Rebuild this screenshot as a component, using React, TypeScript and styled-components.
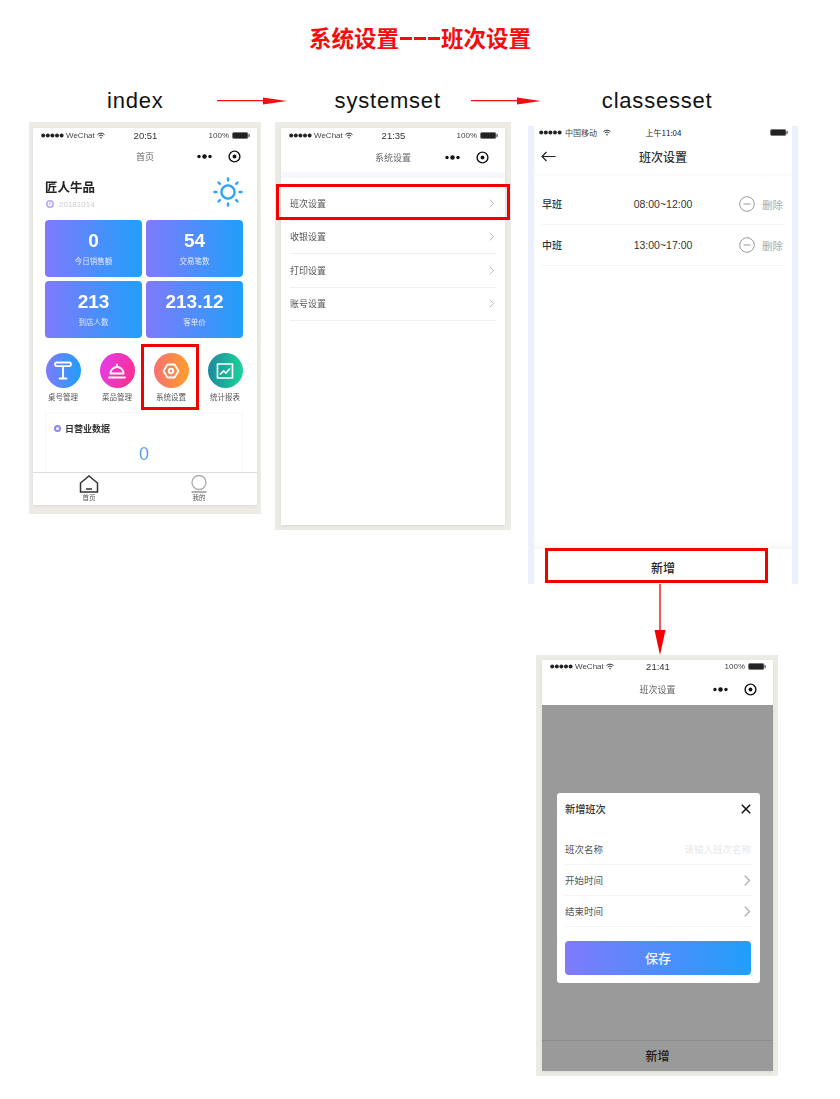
import React from "react";
import styled, { createGlobalStyle } from "styled-components";

const GlobalStyle = createGlobalStyle`
  html, body {
    margin: 0;
    padding: 0;
    background: #fff;
  }
  * {
    box-sizing: border-box;
  }
`;

const cjk = `"Noto Sans CJK SC", "Liberation Sans", sans-serif`;
const latin = `"Liberation Sans", "Noto Sans CJK SC", sans-serif`;
const brand = "linear-gradient(90deg, #7f7afc, #209ffa)";

const Page = styled.div`
  width: 840px;
  height: 1099px;
  padding-top: 24px;
  overflow: hidden;
  font-family: ${cjk};
`;

const Title = styled.h1`
  display: flex;
  align-items: center;
  justify-content: center;
  margin: 0;
  height: 26px;
  line-height: 26px;
  font-size: 22.5px;
  font-weight: 700;
  color: #f60c0c;
`;

const Dashes = styled.span`
  display: flex;
  gap: 2px;
  margin: 3px 1px 0;
`;

const Dash = styled.i`
  width: 12px;
  height: 2.5px;
  background: #f60c0c;
`;

const Steps = styled.div`
  display: flex;
  align-items: center;
  height: 28px;
  margin-top: 37px;
  padding-left: 107px;
`;

const StepName = styled.div<{ $left?: number }>`
  margin-left: ${(p) => p.$left || 0}px;
  font-family: ${latin};
  font-size: 22px;
  line-height: 28px;
  letter-spacing: 0.8px;
  color: #111;
`;

const StepArrow = styled.svg<{ $left: number }>`
  display: block;
  margin-left: ${(p) => p.$left}px;
`;

const Board = styled.div`
  display: flex;
  align-items: flex-start;
  margin-top: 7px;
  padding-left: 29px;
`;

const Frame = styled.div<{ $width: number; $pad: string; $left?: number }>`
  width: ${(p) => p.$width}px;
  margin-left: ${(p) => p.$left || 0}px;
  padding: ${(p) => p.$pad};
  background: #ecebe6;
`;

const Screen = styled.div<{ $height: number }>`
  display: flex;
  flex-direction: column;
  height: ${(p) => p.$height}px;
  background: #fff;
  box-shadow: 0 1px 3px rgba(0, 0, 0, 0.08);
  filter: blur(0.3px);
`;

const Status = styled.div<{ $height: number; $left: number; $right: number }>`
  display: grid;
  grid-template-columns: 1fr auto 1fr;
  align-items: center;
  height: ${(p) => p.$height}px;
  padding: 0 ${(p) => p.$right}px 0 ${(p) => p.$left}px;
  font-family: ${latin};
  font-size: 8px;
  color: #444;
`;

const StatusLeft = styled.div`
  display: flex;
  align-items: center;
  gap: 2px;
`;

const StatusRight = styled.div`
  display: flex;
  align-items: center;
  justify-content: flex-end;
  gap: 3px;
`;

const StatusTime = styled.div`
  font-size: 9.5px;
  color: #333;
`;

const CarrierTime = styled.div`
  font-family: ${cjk};
  font-size: 8px;
  color: #222;
`;

const Carrier = styled.span`
  font-family: ${cjk};
  font-size: 8px;
  margin: 0 4px 0 1px;
  color: #444;
`;

const Nav = styled.div<{ $height: number }>`
  display: grid;
  grid-template-columns: 1fr auto 1fr;
  align-items: center;
  height: ${(p) => p.$height}px;
  padding: 0 16px;
`;

const NavTitle = styled.div`
  font-size: 9px;
  color: #666;
`;

const NavActions = styled.div`
  display: flex;
  align-items: center;
  justify-content: flex-end;
  gap: 16px;
`;

const Seam = styled.div`
  height: 6px;
  background: #f7f8fb;
`;

const Body = styled.div`
  padding: 0 14px 0 12px;
`;

const Head = styled.div`
  display: flex;
  justify-content: space-between;
  height: 50px;
  padding-top: 10px;
`;

const Shop = styled.div`
  font-size: 12.5px;
  line-height: 14px;
  font-weight: 700;
  color: #222;
`;

const DateRow = styled.div`
  display: flex;
  align-items: center;
  gap: 5px;
  height: 14px;
  margin: 3px 0 0 1px;
  font-family: ${latin};
  font-size: 8px;
  color: #ccc;
`;

const SunIcon = styled.svg`
  display: block;
  margin-top: -4px;
`;

const Stats = styled.div`
  display: grid;
  grid-template-columns: 1fr 1fr;
  grid-auto-rows: 57px;
  gap: 4px;
`;

const Stat = styled.div`
  display: flex;
  flex-direction: column;
  align-items: center;
  padding-top: 9px;
  border-radius: 4px;
  background: ${brand};
  color: #fff;
`;

const StatValue = styled.div`
  font-family: ${latin};
  font-size: 19px;
  line-height: 24px;
  font-weight: 700;
`;

const StatLabel = styled.div`
  margin-top: 3px;
  font-size: 7.5px;
  line-height: 10px;
  color: #e8e8ff;
`;

const Tiles = styled.div`
  display: grid;
  grid-template-columns: repeat(4, 54px);
  margin: 6px 0 0 -9px;
`;

const Tile = styled.div`
  position: relative;
  display: flex;
  flex-direction: column;
  align-items: center;
  height: 66px;
  padding-top: 9px;
`;

const TileIcon = styled.div<{ $bg: string }>`
  display: flex;
  align-items: center;
  justify-content: center;
  width: 35px;
  height: 35px;
  border-radius: 50%;
  background: ${(p) => p.$bg};
`;

const TileLabel = styled.div`
  margin-top: 3px;
  font-size: 7.5px;
  line-height: 12px;
  color: #555;
`;

const Highlight = styled.div<{ $inset: string }>`
  position: absolute;
  inset: ${(p) => p.$inset};
  border: 3px solid #f40000;
  pointer-events: none;
`;

const DayCard = styled.div`
  height: 60px;
  margin-top: 2px;
  padding: 8px 0 0 8px;
  border: 1px solid #f7f7f7;
  border-bottom: 0;
`;

const DayTitle = styled.div`
  display: flex;
  align-items: center;
  gap: 4px;
  height: 14px;
  font-size: 9px;
  font-weight: 700;
  color: #333;
`;

const Ring = styled.span`
  width: 7px;
  height: 7px;
  border: 2px solid #8f86f5;
  border-radius: 50%;
`;

const DayValue = styled.div`
  margin: 9px 0 0 -8px;
  font-family: ${latin};
  font-size: 18px;
  line-height: 20px;
  text-align: center;
  color: #5e9ff8;
`;

const Tabs = styled.div`
  display: grid;
  grid-template-columns: 112px 108px;
  height: 33px;
  border-top: 1px solid #ddd;
`;

const Tab = styled.div`
  display: flex;
  flex-direction: column;
  align-items: center;
  padding-top: 2px;
`;

const TabLabel = styled.div`
  font-size: 6.5px;
  line-height: 9px;
  color: #555;
`;

const Menu = styled.div`
  margin-top: 9px;
`;

const MenuRow = styled.div<{ $h: number }>`
  position: relative;
  display: flex;
  align-items: center;
  justify-content: space-between;
  height: ${(p) => p.$h}px;
  margin: 0 9px;
  padding-right: 2px;
  border-bottom: 1px solid #f0f0f0;
  font-size: 9px;
  color: #555;
`;

const ThirdColumn = styled.div`
  display: flex;
  flex-direction: column;
  align-items: flex-start;
  margin: 4px 0 0 17px;
`;

const Shifts = styled.div`
  display: flex;
  flex-direction: column;
  width: 270px;
  height: 458px;
  padding: 0 6px;
  background: #eaf1fb;
`;

const ShiftsScreen = styled(Screen)`
  position: relative;
  box-shadow: none;
  filter: none;
`;

const ShiftNav = styled(Nav)`
  padding: 0 7px;
`;

const ShiftTitle = styled.div`
  font-size: 12px;
  font-weight: 500;
  color: #333;
`;

const NavFade = styled.div`
  height: 4px;
  background: linear-gradient(#fafafa, #fff);
`;

const ShiftList = styled.div`
  margin-top: 6px;
  padding: 0 8px;
`;

const ShiftRow = styled.div`
  display: grid;
  grid-template-columns: 1fr auto 1fr;
  align-items: center;
  height: 41px;
  border-bottom: 1px solid #f3f3f3;
`;

const ShiftName = styled.div`
  padding-bottom: 1px;
  font-size: 10px;
  font-weight: 500;
  color: #333;
`;

const ShiftTime = styled.div`
  font-family: ${latin};
  font-size: 10.5px;
  color: #333;
`;

const ShiftAction = styled.div`
  display: flex;
  align-items: center;
  justify-content: flex-end;
  gap: 7px;
  padding-right: 1px;
  font-size: 10.5px;
  color: #aaa;
`;

const AddFade = styled.div`
  height: 8px;
  margin-top: auto;
  background: linear-gradient(#fff, #f7f7f7);
`;

const AddBar = styled.div`
  position: relative;
  display: flex;
  align-items: center;
  justify-content: center;
  height: 35px;
  padding-top: 1px;
  font-size: 12px;
  font-weight: 500;
  color: #222;
`;

const Connector = styled.svg`
  display: block;
  margin-left: 125px;
`;

const Mask = styled.div`
  flex: 1;
  display: flex;
  flex-direction: column;
  background: #9a9a9a;
`;

const Modal = styled.div`
  width: 203.5px;
  margin: 88px 0 0 14.5px;
  padding: 0 9px 8px 8.5px;
  border-radius: 3px;
  background: #fff;
`;

const ModalHead = styled.div`
  display: flex;
  align-items: center;
  justify-content: space-between;
  height: 32px;
  margin-bottom: 9px;
  padding-bottom: 1px;
  font-size: 10.2px;
  font-weight: 500;
  color: #333;
`;

const FormRow = styled.div`
  display: flex;
  align-items: center;
  justify-content: space-between;
  height: 31px;
  border-bottom: 1px solid #f3f3f3;
  font-size: 9.5px;
  color: #555;
`;

const Placeholder = styled.span`
  color: #e8e8e8;
`;

const Save = styled.div`
  display: flex;
  align-items: center;
  justify-content: center;
  height: 34px;
  margin-top: 14px;
  padding-bottom: 2px;
  border-radius: 4px;
  background: ${brand};
  font-size: 13px;
  font-weight: 500;
  color: #f4f4ff;
`;

const MaskBar = styled.div`
  display: flex;
  align-items: center;
  justify-content: center;
  height: 31px;
  margin-top: auto;
  padding-bottom: 2px;
  border-top: 1px solid #8c8c8c;
  font-size: 12px;
  font-weight: 500;
  color: #1c1c1c;
`;

const Signal = () => (
  <svg width="23" height="5" viewBox="0 0 23 5">
    {[2.2, 6.8, 11.4, 16, 20.6].map((x) => (
      <circle key={x} cx={x} cy="2.5" r="2" fill="#222" />
    ))}
  </svg>
);

const Wifi = () => (
  <svg width="8" height="7" viewBox="0 0 8 7" fill="none" stroke="#333">
    <path d="M.5 2.6a5 5 0 0 1 7 0M1.8 4a3.2 3.2 0 0 1 4.4 0" />
    <circle cx="4" cy="5.7" r=".8" fill="#333" stroke="none" />
  </svg>
);

const Battery = () => (
  <svg width="18" height="7" viewBox="0 0 18 7">
    <rect x=".5" y=".5" width="15.5" height="6" rx="1.5" fill="#222" stroke="#777" />
    <rect x="16.6" y="2.2" width="1.2" height="2.6" fill="#555" />
  </svg>
);

const MoreTarget = () => (
  <NavActions>
    <svg width="15" height="5" viewBox="0 0 15 5">
      <circle cx="2" cy="2.5" r="1.7" fill="#111" />
      <circle cx="7.5" cy="2.5" r="2.2" fill="#111" />
      <circle cx="13" cy="2.5" r="1.7" fill="#111" />
    </svg>
    <svg width="13" height="13" viewBox="0 0 13 13">
      <circle cx="6.5" cy="6.5" r="5.4" fill="none" stroke="#111" strokeWidth="1.4" />
      <circle cx="6.5" cy="6.5" r="1.9" fill="#111" />
    </svg>
  </NavActions>
);

const Chevron = ({ size = 9, color = "#bbb" }: { size?: number; color?: string }) => (
  <svg width={size * 0.6} height={size} viewBox="0 0 6 10" fill="none" stroke={color} strokeWidth="1.1">
    <path d="M.7.7 5 5 .7 9.3" />
  </svg>
);

const MinusCircle = () => (
  <svg width="16" height="16" viewBox="0 0 16 16" fill="none" stroke="#999">
    <circle cx="8" cy="8" r="7.3" />
    <path d="M4.5 8h7" />
  </svg>
);

const WeChatStatus = ({ time, height = 14 }: { time: string; height?: number }) => (
  <Status $height={height} $left={8} $right={7}>
    <StatusLeft>
      <Signal />
      WeChat
      <Wifi />
    </StatusLeft>
    <StatusTime>{time}</StatusTime>
    <StatusRight>
      100%
      <Battery />
    </StatusRight>
  </Status>
);

const RedArrow = ({ left }: { left: number }) => (
  <StepArrow $left={left} width="70" height="10" viewBox="0 0 70 10">
    <path d="M0 4.6h48" stroke="#f01010" strokeWidth="1.2" />
    <path d="M46 1.5 70 5 46 8.5z" fill="#f01010" />
  </StepArrow>
);

const stats = [
  { value: "0", label: "今日销售额" },
  { value: "54", label: "交易笔数" },
  { value: "213", label: "到店人数" },
  { value: "213.12", label: "客单价" },
];

const tiles = [
  {
    label: "桌号管理",
    bg: brand,
    icon: (
      <g fill="none" stroke="#fff" strokeWidth="1.8" strokeLinecap="round">
        <rect x="6" y="5.5" width="16" height="3.6" rx="1.8" />
        <path d="M14 9.4V21M10.5 21.5h7" />
      </g>
    ),
  },
  {
    label: "菜品管理",
    bg: "linear-gradient(110deg, #e23df2, #ff2d85)",
    icon: (
      <g fill="none" stroke="#fff" strokeWidth="1.8" strokeLinecap="round">
        <path d="M7.5 16.5a6.5 6.5 0 0 1 13 0zM14 10V7.5M6 20.5h16" />
      </g>
    ),
  },
  {
    label: "系统设置",
    bg: "linear-gradient(90deg, #f86f70, #ff9f2b)",
    icon: (
      <g fill="none" stroke="#fff" strokeWidth="1.9" strokeLinejoin="round">
        <path d="M10.5 7.5h7l4 6.5-4 6.5h-7l-4-6.5z" />
        <circle cx="14" cy="14" r="2.2" />
      </g>
    ),
  },
  {
    label: "统计报表",
    bg: "linear-gradient(90deg, #1b8a9e, #1dd29a)",
    icon: (
      <g fill="none" stroke="#fff" strokeWidth="1.7" strokeLinejoin="round">
        <path d="M6.5 7h15v14h-15zM9 17.5l3.5-3.5 2.5 2 4-4.5" />
      </g>
    ),
  },
];

const Sun = () => (
  <SunIcon width="30" height="32" viewBox="0 0 30 32" fill="none" stroke="#2ba4f8" strokeWidth="2.4" strokeLinecap="round">
    <circle cx="15" cy="16" r="6.6" />
    <path d="M15 2.5v2M15 27.500v2M1.500 16h2M26.500 16h2M5.500 6.500l1.300 1.300M23.200 24.200l1.300 1.300M5.500 25.500l1.300-1.300M23.200 7.800l1.300-1.300" />
  </SunIcon>
);

function App() {
  return (
    <Page>
      <GlobalStyle />
      <Title>
        系统设置
        <Dashes>
          <Dash />
          <Dash />
          <Dash />
        </Dashes>
        班次设置
      </Title>

      <Steps>
        <StepName>index</StepName>
        <RedArrow left={53} />
        <StepName $left={48}>systemset</StepName>
        <RedArrow left={30} />
        <StepName $left={61}>classesset</StepName>
      </Steps>

      <Board>
        <Frame $width={232} $pad="6px 4px 9px">
          <Screen $height={377}>
            <WeChatStatus time="20:51" />
            <Nav $height={28}>
              <span />
              <NavTitle>首页</NavTitle>
              <MoreTarget />
            </Nav>
            <Body>
              <Head>
                <div>
                  <Shop>匠人牛品</Shop>
                  <DateRow>
                    <svg width="8" height="8" viewBox="0 0 8 8" fill="none" stroke="#b3a8fa" strokeWidth="1.5">
                      <circle cx="4" cy="4" r="3.2" />
                      <path d="M4 2.2V4.2H2.6" strokeWidth="1" />
                    </svg>
                    20181014
                  </DateRow>
                </div>
                <Sun />
              </Head>
              <Stats>
                {stats.map((s) => (
                  <Stat key={s.label}>
                    <StatValue>{s.value}</StatValue>
                    <StatLabel>{s.label}</StatLabel>
                  </Stat>
                ))}
              </Stats>
              <Tiles>
                {tiles.map((t) => (
                  <Tile key={t.label}>
                    <TileIcon $bg={t.bg}>
                      <svg width="28" height="28" viewBox="0 0 28 28">
                        {t.icon}
                      </svg>
                    </TileIcon>
                    <TileLabel>{t.label}</TileLabel>
                    {t.label === "系统设置" && <Highlight $inset="0 -1px 0 -3px" />}
                  </Tile>
                ))}
              </Tiles>
              <DayCard>
                <DayTitle>
                  <Ring />
                  日营业数据
                </DayTitle>
                <DayValue>0</DayValue>
              </DayCard>
            </Body>
            <Tabs>
              <Tab>
                <svg width="20" height="18" viewBox="0 0 20 18" fill="none" stroke="#333" strokeWidth="1.5">
                  <path d="M1.5 8 10 1l8.500 7v9h-17zM7 14h6" />
                </svg>
                <TabLabel>首页</TabLabel>
              </Tab>
              <Tab>
                <svg width="18" height="18" viewBox="0 0 18 18" fill="none" stroke="#aaa" strokeWidth="1.3">
                  <circle cx="9" cy="7.5" r="7" />
                  <path d="M1.500 17h15" stroke="#888" />
                </svg>
                <TabLabel>我的</TabLabel>
              </Tab>
            </Tabs>
          </Screen>
        </Frame>

        <Frame $width={236} $pad="6px 6px 5px" $left={14}>
          <Screen $height={397}>
            <WeChatStatus time="21:35" />
            <Nav $height={30}>
              <span />
              <NavTitle>系统设置</NavTitle>
              <MoreTarget />
            </Nav>
            <Seam />
            <Menu>
              <MenuRow $h={33.5}>
                班次设置
                <Chevron />
                <Highlight $inset="-3px -14px 0" />
              </MenuRow>
              <MenuRow $h={33.5}>
                收银设置
                <Chevron />
              </MenuRow>
              <MenuRow $h={33.5}>
                打印设置
                <Chevron />
              </MenuRow>
              <MenuRow $h={33.5}>
                账号设置
                <Chevron />
              </MenuRow>
            </Menu>
          </Screen>
        </Frame>

        <ThirdColumn>
          <Shifts>
            <ShiftsScreen $height={458}>
              <Status $height={12} $left={5} $right={4}>
                <StatusLeft>
                  <Signal />
                  <Carrier>中国移动</Carrier>
                  <Wifi />
                </StatusLeft>
                <CarrierTime>上午11:04</CarrierTime>
                <StatusRight>
                  <Battery />
                </StatusRight>
              </Status>
              <ShiftNav $height={36}>
                <svg width="15" height="11" viewBox="0 0 15 11" fill="none" stroke="#222" strokeWidth="1.2">
                  <path d="M14.500 5.500H1M5.500 1 1 5.500 5.500 10" />
                </svg>
                <ShiftTitle>班次设置</ShiftTitle>
                <span />
              </ShiftNav>
              <NavFade />
              <ShiftList>
                <ShiftRow>
                  <ShiftName>早班</ShiftName>
                  <ShiftTime>08:00~12:00</ShiftTime>
                  <ShiftAction>
                    <MinusCircle />
                    删除
                  </ShiftAction>
                </ShiftRow>
                <ShiftRow>
                  <ShiftName>中班</ShiftName>
                  <ShiftTime>13:00~17:00</ShiftTime>
                  <ShiftAction>
                    <MinusCircle />
                    删除
                  </ShiftAction>
                </ShiftRow>
              </ShiftList>
              <AddFade />
              <AddBar>
                新增
                <Highlight $inset="-1px 24px 1px 11px" />
              </AddBar>
            </ShiftsScreen>
          </Shifts>

          <Connector width="14" height="71" viewBox="0 0 14 71">
            <path d="M7 0v48" stroke="#f01010" strokeWidth="1.4" />
            <path d="M1.500 46h11L7 71z" fill="#f40000" />
          </Connector>

          <Frame $width={242} $pad="5px 5px 5px 6px" $left={8}>
            <Screen $height={411}>
              <WeChatStatus time="21:41" height={13} />
              <Nav $height={32}>
                <span />
                <NavTitle>班次设置</NavTitle>
                <MoreTarget />
              </Nav>
              <Mask>
                <Modal>
                  <ModalHead>
                    新增班次
                    <svg width="10" height="10" viewBox="0 0 10 10" stroke="#111" strokeWidth="1.5">
                      <path d="M.8.8l8.400 8.400M9.200.8.800 9.200" />
                    </svg>
                  </ModalHead>
                  <FormRow>
                    班次名称
                    <Placeholder>请输入班次名称</Placeholder>
                  </FormRow>
                  <FormRow>
                    开始时间
                    <Chevron size={11} color="#aaa" />
                  </FormRow>
                  <FormRow>
                    结束时间
                    <Chevron size={11} color="#aaa" />
                  </FormRow>
                  <Save>保存</Save>
                </Modal>
                <MaskBar>新增</MaskBar>
              </Mask>
            </Screen>
          </Frame>
        </ThirdColumn>
      </Board>
    </Page>
  );
}

export default App;
